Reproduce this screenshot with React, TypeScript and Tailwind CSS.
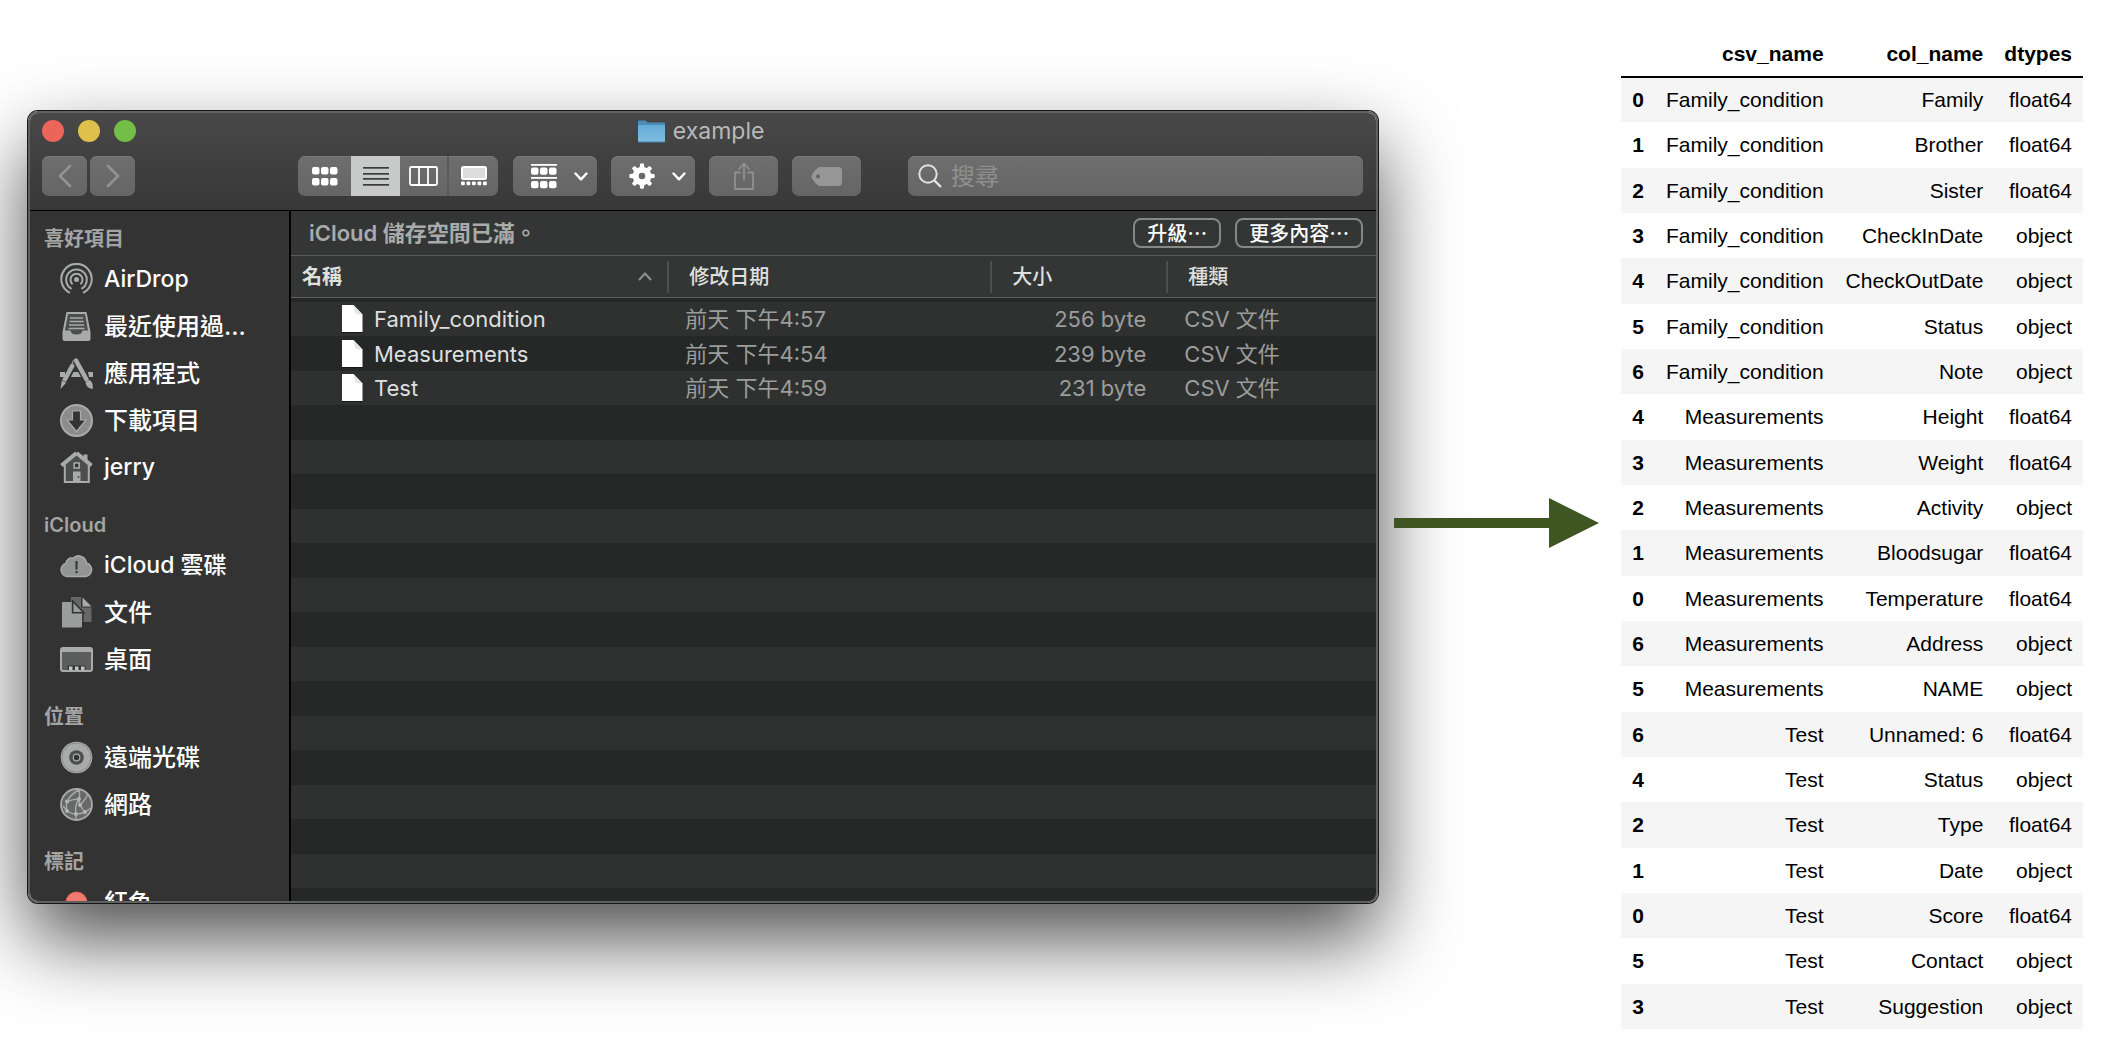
import React from 'react';

type IconProps = { className?: string };

const csvRows: [number, string, string, string][] = [
  [0, 'Family_condition', 'Family', 'float64'],
  [1, 'Family_condition', 'Brother', 'float64'],
  [2, 'Family_condition', 'Sister', 'float64'],
  [3, 'Family_condition', 'CheckInDate', 'object'],
  [4, 'Family_condition', 'CheckOutDate', 'object'],
  [5, 'Family_condition', 'Status', 'object'],
  [6, 'Family_condition', 'Note', 'object'],
  [4, 'Measurements', 'Height', 'float64'],
  [3, 'Measurements', 'Weight', 'float64'],
  [2, 'Measurements', 'Activity', 'object'],
  [1, 'Measurements', 'Bloodsugar', 'float64'],
  [0, 'Measurements', 'Temperature', 'float64'],
  [6, 'Measurements', 'Address', 'object'],
  [5, 'Measurements', 'NAME', 'object'],
  [6, 'Test', 'Unnamed: 6', 'float64'],
  [4, 'Test', 'Status', 'object'],
  [2, 'Test', 'Type', 'float64'],
  [1, 'Test', 'Date', 'object'],
  [0, 'Test', 'Score', 'float64'],
  [5, 'Test', 'Contact', 'object'],
  [3, 'Test', 'Suggestion', 'object'],
];

const files = [
  { name: 'Family_condition', date: '前天 下午4:57', size: '256 byte' },
  { name: 'Measurements', date: '前天 下午4:54', size: '239 byte' },
  { name: 'Test', date: '前天 下午4:59', size: '231 byte' },
];

/* ---------- sidebar icons ---------- */

function AirDropIcon() {
  return (
    <svg viewBox="0 0 33 33" className="size-[33px]" fill="none" stroke="#a9abaa" strokeWidth="2">
      <circle cx="16.500" cy="16.500" r="2.500" fill="#a9abaa" stroke="none" />
      <path d="M12.600 21.200a6 6 0 1 1 7.800 0" />
      <path d="M11.600 25.600a10.300 10.300 0 1 1 9.800 0" transform="translate(0 .2)" />
      <path d="M9.900 29.800a15.200 15.200 0 1 1 13.200 0" />
    </svg>
  );
}

function RecentsIcon() {
  return (
    <svg viewBox="0 0 33 33" className="size-[33px]" fill="none">
      <path d="M6.500 2h20l4 20v6.500a2.500 2.500 0 0 1-2.500 2.500H5a2.500 2.500 0 0 1-2.500-2.500V22z" fill="#a9abaa" />
      <path d="M8 4h17l3 16.500H22.500c-.6 3-2.500 4-6 4s-5.400-1-6-4H5z" fill="#4b4e4d" />
      <path d="M10 8h13M9.500 11.500h14M9 15h15M8.500 18.500h16" stroke="#a9abaa" strokeWidth="1.700" />
    </svg>
  );
}

function AppsIcon() {
  return (
    <svg viewBox="0 0 33 33" className="size-[33px]" fill="none">
      <path d="M0 15h5v5H0zM13.500 15h6l2.500 5H11zM28 15h5v5h-4z" fill="#a9abaa" />
      <path d="M13 7.500 L4 24" stroke="#a9abaa" strokeWidth="4.500" />
      <path d="M1.800 23.500l4.300 2.300L.5 32z" fill="#a9abaa" />
      <circle cx="14" cy="5.500" r="2.200" fill="#a9abaa" />
      <path d="M15.500 3 L27.500 24.500" stroke="#343434" strokeWidth="7" />
      <path d="M16 3.500 L26.500 22.500" stroke="#a9abaa" strokeWidth="4.500" strokeLinecap="round" />
      <path d="M25.500 25.500l4.300-2.500c3 2.500 3.200 5 3 9-3.500-.5-6.500-2-7.300-6.500z" fill="#a9abaa" />
    </svg>
  );
}

function DownloadsIcon() {
  return (
    <svg viewBox="0 0 33 33" className="size-[33px]">
      <circle cx="16.500" cy="16.500" r="15.500" fill="#8a8d8c" stroke="#a9abaa" strokeWidth="2" />
      <path d="M12.500 7h8v9h5.500l-9.500 11.500L7 16h5.500z" fill="#333333" stroke="#a9abaa" strokeWidth="1.200" />
    </svg>
  );
}

function HomeIcon() {
  return (
    <svg viewBox="0 0 33 33" className="size-[33px]" fill="none">
      <path d="M23.500 3.500h4V11l-4-3.500z" fill="#a9abaa" />
      <path d="M4.800 13L16.500 4l12.300 9v18h-24z" fill="#4b4e4d" />
      <path d="M4.800 14v17h24V14" stroke="#a9abaa" strokeWidth="2" />
      <path d="M16.500 2 L31.500 14.500 M16.500 2 L1.500 14.500" stroke="#a9abaa" strokeWidth="4" />
      <path d="M14.200 12h5v5h-5z" stroke="#a9abaa" strokeWidth="1.600" fill="#333333" />
      <path d="M13 20.500h7.500V31H13z" fill="#a9abaa" />
      <circle cx="18.500" cy="26" r="1" fill="#4b4e4d" />
    </svg>
  );
}

function CloudIcon() {
  return (
    <svg viewBox="0 0 33 33" className="size-[33px]">
      <path
        d="M7.500 27.500a6.700 6.700 0 0 1-1.300-13.200 5.300 5.300 0 0 1 6.700-5A8 8 0 0 1 26.500 14a6.900 6.900 0 0 1-1 13.500z"
        fill="#929594"
        stroke="#a9abaa"
        strokeWidth="1.500"
      />
      <path d="M16.500 12v8.500" stroke="#333333" strokeWidth="2" />
      <circle cx="16.500" cy="23" r="1.200" fill="#333333" />
    </svg>
  );
}

function DocumentsIcon() {
  return (
    <svg viewBox="0 0 33 33" className="size-[33px]">
      <path d="M11 1h10v10.500h10.500V26H11z" fill="#656867" />
      <path d="M22.500 1.500v9h9z" fill="#a9abaa" />
      <path d="M2 6h11.500v10.500H22V31.500H2z" fill="#9a9d9c" />
      <path d="M23 16.500V31.500h-1.500" stroke="#333333" strokeWidth="1.500" fill="none" />
      <path d="M12.600 5v11.800h11.200z" fill="#9a9d9c" stroke="#333333" strokeWidth="1.600" />
    </svg>
  );
}

function DesktopIcon() {
  return (
    <svg viewBox="0 0 33 33" className="size-[33px]">
      <rect x="1" y="5" width="31" height="23" rx="2" fill="#5b5e5d" stroke="#a9abaa" strokeWidth="2" />
      <path d="M1 5h31v4H1z" fill="#a9abaa" />
      <path d="M7.500 22.500h18V27h-18z" fill="#333333" />
      <path d="M9 23.500h3.500V27H9zM15 23.500h3.500V27H15zM21 23.500h3.500V27H21z" fill="#c4c6c5" />
    </svg>
  );
}

function DiscIcon() {
  return (
    <svg viewBox="0 0 33 33" className="size-[33px]" fill="none">
      <circle cx="16.500" cy="16.500" r="15.800" fill="#a9abaa" />
      <circle cx="16.500" cy="16.500" r="14.500" stroke="#8a8d8c" />
      <circle cx="16.500" cy="16.500" r="7.300" fill="#4b4e4d" />
      <circle cx="16.500" cy="16.500" r="3.300" stroke="#a9abaa" strokeWidth="1.200" fill="#333333" />
    </svg>
  );
}

function NetworkIcon() {
  return (
    <svg viewBox="0 0 33 33" className="size-[33px]" fill="none" stroke="#a9abaa" strokeWidth="1.400">
      <circle cx="16.500" cy="16.500" r="15.500" fill="#666968" strokeWidth="1.800" />
      <path d="M7 13.500C10 8 14 4 20 1.500M7 13.500C6 17 6 20 7 23M7 13.500C11 12 15 11 19 11M19 11c1-3 1-6 0-9.500M19 11C16 15 15 20 16 26v6M20 17c3-3 6-6 7.500-10.500M19 11c0 6 3 10 6 13M7 23c3 2 6 3 9 3s6-.5 9-2l6-4M7 23l-4-5" />
      <g fill="#b4b6b5" stroke="none">
        <circle cx="7" cy="13.500" r="2" />
        <circle cx="19" cy="11" r="2" />
        <circle cx="20" cy="17" r="2" />
        <circle cx="7" cy="23" r="2" />
        <circle cx="16" cy="26" r="2" />
        <circle cx="25" cy="24" r="2" />
      </g>
    </svg>
  );
}

function RedTagIcon() {
  return (
    <svg viewBox="0 0 33 33" className="size-[33px]">
      <circle cx="16.500" cy="16.500" r="10.500" fill="#f17b70" stroke="#ee6153" />
    </svg>
  );
}

const sidebarGroups = [
  {
    title: '喜好項目',
    items: [
      { label: 'AirDrop', size: 'text-[23px]', Icon: AirDropIcon },
      { label: '最近使用過...', size: 'text-[24px]', Icon: RecentsIcon },
      { label: '應用程式', size: 'text-[24px]', Icon: AppsIcon },
      { label: '下載項目', size: 'text-[24px]', Icon: DownloadsIcon },
      { label: 'jerry', size: 'text-[23px]', Icon: HomeIcon },
    ],
  },
  {
    title: 'iCloud',
    items: [
      { label: 'iCloud 雲碟', size: 'text-[23px]', Icon: CloudIcon },
      { label: '文件', size: 'text-[24px]', Icon: DocumentsIcon },
      { label: '桌面', size: 'text-[24px]', Icon: DesktopIcon },
    ],
  },
  {
    title: '位置',
    items: [
      { label: '遠端光碟', size: 'text-[24px]', Icon: DiscIcon },
      { label: '網路', size: 'text-[24px]', Icon: NetworkIcon },
    ],
  },
  { title: '標記', items: [{ label: '紅色', size: 'text-[24px]', Icon: RedTagIcon }] },
];

/* ---------- toolbar icons ---------- */

function GridIcon() {
  return (
    <svg width="26" height="20" viewBox="0 0 26 20" fill="#fff">
      {[0, 9, 18].map((x) =>
        [1, 12].map((y) => <rect key={`${x}-${y}`} x={x} y={y} width="7.500" height="7.500" rx="2" />),
      )}
    </svg>
  );
}

function ListIcon() {
  return (
    <svg width="26" height="20" viewBox="0 0 26 20" fill="#3b3b3b">
      {[1, 7, 12, 18].map((y) => (
        <rect key={y} x="0" y={y} width="26" height="1.700" />
      ))}
    </svg>
  );
}

function ColumnsIcon() {
  return (
    <svg width="29" height="20" viewBox="0 0 29 20" fill="none" stroke="#fff" strokeWidth="1.800">
      <rect x="1" y="1" width="27" height="18" rx="1.500" />
      <path d="M10 1v18M19 1v18" />
    </svg>
  );
}

function GalleryIcon() {
  return (
    <svg width="26" height="20" viewBox="0 0 26 20">
      <rect x="1" y="1" width="24" height="12" rx="1.500" fill="#dcdcdc" stroke="#fff" strokeWidth="2" />
      {[0, 5.5, 11, 16.5, 22].map((x) => (
        <rect key={x} x={x} y="15.500" width="3.800" height="3.800" rx="1" fill="#fff" />
      ))}
    </svg>
  );
}

function GroupIcon() {
  return (
    <svg width="26" height="26" viewBox="0 0 26 26" fill="#fff">
      <rect y="1" width="26" height="1.800" />
      <rect y="14" width="26" height="1.800" />
      {[0, 9, 18].map((x) =>
        [4.5, 18].map((y) => <rect key={`${x}-${y}`} x={x} y={y} width="7.500" height="7.300" rx="2" />),
      )}
    </svg>
  );
}

function GearIcon() {
  return (
    <svg width="26" height="26" viewBox="-13 -13 26 26" fill="#fff">
      {[0, 45, 90, 135, 180, 225, 270, 315].map((a) => (
        <path key={a} d="M-2.600 -6 L-1.900 -12.200 Q0 -13.300 1.900 -12.200 L2.600 -6z" transform={`rotate(${a})`} />
      ))}
      <circle r="6.300" fill="none" stroke="#fff" strokeWidth="6" />
    </svg>
  );
}

function ChevronDown() {
  return (
    <svg width="14" height="9" viewBox="0 0 14 9" fill="none" stroke="#fff" strokeWidth="2.400" strokeLinecap="round" strokeLinejoin="round">
      <path d="M1.500 1.500 L7 7.300 L12.500 1.500" />
    </svg>
  );
}

function ShareIcon() {
  return (
    <svg width="22" height="28" viewBox="0 0 22 28" fill="none" stroke="#8f8f8f" strokeWidth="1.800">
      <path d="M7.500 10.500H2V27h18V10.500h-5.500M11 18.500V1.500M5.500 7.500 11 1.500l5.500 6" />
    </svg>
  );
}

function TagIcon() {
  return (
    <svg width="31" height="19" viewBox="0 0 31 19">
      <path d="M9 0h18a4 4 0 0 1 4 4v11a4 4 0 0 1-4 4H9C6 19 .5 12 .5 9.500S6 0 9 0z" fill="#969696" />
      <circle cx="7" cy="9.500" r="2" fill="#636363" />
    </svg>
  );
}

function SearchIcon({ className }: IconProps) {
  return (
    <svg width="24" height="24" viewBox="0 0 24 24" fill="none" stroke="#e2e2e2" strokeWidth="2" className={className}>
      <circle cx="10" cy="10" r="8.700" />
      <path d="M16.300 16.300 L23 23" strokeWidth="2.400" />
    </svg>
  );
}

function FolderIcon() {
  return (
    <svg width="27" height="23" viewBox="0 0 27 23">
      <defs>
        <linearGradient id="folder-front" x1="0" y1="0" x2="0" y2="1">
          <stop offset="0" stopColor="#62acd9" />
          <stop offset="1" stopColor="#7fbde0" />
        </linearGradient>
      </defs>
      <path d="M0 1.500Q0 .5 1 .5h6.500l2 2H26q1 0 1 1V8H0z" fill="#4c8db5" />
      <path d="M0 5h27v16q0 1-1 1H1q-1 0-1-1z" fill="url(#folder-front)" />
      <path d="M.5 22h26" stroke="#4a86ab" />
    </svg>
  );
}

function FileIcon() {
  return (
    <svg width="21" height="28" viewBox="0 0 21 28" className="shrink-0">
      <path d="M0 0h11.500L20.500 9.500V27H0z" fill="#fff" />
      <path d="M11.500 0 L20.500 9.500 Q15 9.500 13.500 8 Q12.500 6 11.500 0z" fill="#e4e4e4" />
      <path d="M0 27.500h20.500" stroke="#161717" />
    </svg>
  );
}

const control =
  'flex h-10 items-center justify-center bg-linear-to-b from-[#6e6e6e] to-[#656565] shadow-[inset_0_1px_0_#7a7a7a]';

function Toolbar() {
  return (
    <div className="flex pb-[14px] pl-3 pr-[13px]">
      <div className="flex gap-[3px]">
        <button aria-label="上一頁" className={`${control} w-[45px] rounded-[7px]`}>
          <svg width="14" height="24" viewBox="0 0 14 24" fill="none" stroke="#929292" strokeWidth="2.600" strokeLinecap="round">
            <path d="M12 2 L2 12 L12 22" />
          </svg>
        </button>
        <button aria-label="下一頁" className={`${control} w-[45px] rounded-[7px]`}>
          <svg width="14" height="24" viewBox="0 0 14 24" fill="none" stroke="#929292" strokeWidth="2.600" strokeLinecap="round">
            <path d="M2 2 L12 12 L2 22" />
          </svg>
        </button>
      </div>
      <div className="ml-[163px] flex overflow-hidden rounded-[7px]">
        <button aria-label="圖像" className={`${control} w-[53px]`}>
          <GridIcon />
        </button>
        <button aria-label="列表" aria-pressed="true" className="flex h-10 w-[49px] items-center justify-center bg-[#c8cac9]">
          <ListIcon />
        </button>
        <button aria-label="直欄" className={`${control} w-[49px] border-r-2 border-[#5b5b5b]`}>
          <ColumnsIcon />
        </button>
        <button aria-label="圖庫" className={`${control} w-[49px]`}>
          <GalleryIcon />
        </button>
      </div>
      <button aria-label="群組" className={`${control} ml-[15px] w-[84px] gap-[17px] rounded-[7px] pl-2`}>
        <GroupIcon />
        <ChevronDown />
      </button>
      <button aria-label="動作" className={`${control} ml-[14px] w-[84px] gap-[17px] rounded-[7px] pl-2`}>
        <GearIcon />
        <ChevronDown />
      </button>
      <button aria-label="分享" className={`${control} ml-[14px] w-[69px] rounded-[7px]`}>
        <ShareIcon />
      </button>
      <button aria-label="標籤" className={`${control} ml-[14px] w-[69px] rounded-[7px]`}>
        <TagIcon />
      </button>
      <label className={`${control} ml-[47px] min-w-0 flex-1 gap-[9px] rounded-[7px] pl-[10px]`}>
        <SearchIcon className="shrink-0" />
        <input
          type="search"
          aria-label="搜尋"
          placeholder="搜尋"
          className="h-full min-w-0 flex-1 bg-transparent text-[24px] text-white outline-none placeholder:text-[#8f8f8f]"
        />
      </label>
    </div>
  );
}

function Sidebar() {
  return (
    <nav
      aria-label="側邊欄"
      className="w-[261px] shrink-0 overflow-hidden border-r-2 border-black bg-[#333333] pt-[9px] [contain:size]"
    >
      {sidebarGroups.map((group) => (
        <section key={group.title} className="mb-[15px]">
          <h2 className="flex h-9 items-center pl-[14px] pt-px text-[20px] font-semibold text-[#a4a4a4]">{group.title}</h2>
          <ul>
            {group.items.map(({ label, size, Icon }) => (
              <li key={label}>
                <a
                  href="#"
                  className={`flex h-[47px] items-center gap-[11px] whitespace-nowrap pl-[30px] font-medium text-white ${size}`}
                >
                  <Icon />
                  {label}
                </a>
              </li>
            ))}
          </ul>
        </section>
      ))}
    </nav>
  );
}

function ColumnLabel({ children, first }: { children: React.ReactNode; first?: boolean }) {
  return (
    <div
      className={
        first
          ? 'flex h-8 items-center justify-between pl-[11px] pr-[15px]'
          : 'flex h-8 items-center border-l-2 border-[#4d4f4e] pl-5'
      }
    >
      {children}
    </div>
  );
}

function FileList() {
  return (
    <div className="min-w-0 flex-1 bg-[#262827]">
      <div className="flex h-[45px] items-center gap-[14px] border-b border-[#5a5c5b] bg-[#343635] pl-[18px] pr-[13px]">
        <p className="flex-1 text-[22px] font-semibold text-[#a9abaa]">iCloud 儲存空間已滿。</p>
        {['升級…', '更多內容…'].map((label) => (
          <button
            key={label}
            className="flex h-[30px] items-center rounded-lg border-2 border-[#868887] px-3 font-['Noto_Sans_CJK_TC',sans-serif] text-[20px] font-medium leading-none text-white"
          >
            {label}
          </button>
        ))}
      </div>
      <table className="w-full table-fixed border-separate border-spacing-0">
        <colgroup>
          <col />
          <col className="w-[323px]" />
          <col className="w-[176px]" />
          <col className="w-[210px]" />
        </colgroup>
        <thead>
          <tr className="h-[42px] bg-[#343635] text-left text-[20px] text-[#dfe0df]">
            <th className="border-b border-[#5e605f] p-0 font-semibold">
              <ColumnLabel first>
                名稱
                <svg width="14" height="9" viewBox="0 0 14 9" fill="none" stroke="#8f9190" strokeWidth="2">
                  <path d="M1 8 L7 1.500 L13 8" />
                </svg>
              </ColumnLabel>
            </th>
            <th className="border-b border-[#5e605f] p-0 font-medium">
              <ColumnLabel>修改日期</ColumnLabel>
            </th>
            <th className="border-b border-[#5e605f] p-0 font-medium">
              <ColumnLabel>大小</ColumnLabel>
            </th>
            <th className="border-b border-[#5e605f] p-0 font-medium">
              <ColumnLabel>種類</ColumnLabel>
            </th>
          </tr>
        </thead>
        <tbody className="text-[22px] leading-[34px] text-[#9b9d9c]">
          <tr aria-hidden="true" className="h-1">
            <td colSpan={4} className="p-0" />
          </tr>
          {files.map((file, i) => (
            <tr key={file.name} className={i % 2 === 0 ? 'h-[34px] bg-[#2f3130]' : 'h-[35px] bg-[#262827]'}>
              <td className="p-0">
                <div className="flex items-center gap-[11px] pl-[51px] text-[#dedfdf]">
                  <FileIcon />
                  {file.name}
                </div>
              </td>
              <td className="p-0 pl-[18px]">{file.date}</td>
              <td className="p-0 pr-5 text-right">{file.size}</td>
              <td className="p-0 pl-[18px]">CSV 文件</td>
            </tr>
          ))}
        </tbody>
      </table>
      {Array.from({ length: 14 }, (_, i) => (
        <div key={i} className={i % 2 === 0 ? 'h-[35px] bg-[#262827]' : 'h-[34px] bg-[#2f3130]'} />
      ))}
      <div className="h-[13px] bg-[#262827]" />
    </div>
  );
}

function FinderWindow() {
  return (
    <section
      aria-label="example"
      className="mt-[111px] min-w-0 flex-1 overflow-hidden rounded-[10px] border-2 border-[#5f6160] shadow-[0_0_0_1px_#161716,0_36px_80px_rgba(0,0,0,0.7)]"
    >
      <header className="border-b border-black bg-linear-to-b from-[#484848] to-[#383838]">
        <div className="grid h-[43px] grid-cols-[1fr_auto_1fr] items-center pb-[7px] pl-3 pr-4">
          <div className="flex gap-[14px]">
            <button aria-label="關閉" className="size-[22px] rounded-full bg-[#ed655a]" />
            <button aria-label="縮到最小" className="size-[22px] rounded-full bg-[#e0c04c]" />
            <button aria-label="放大" className="size-[22px] rounded-full bg-[#72be47]" />
          </div>
          <h1 className="flex items-center gap-2 text-[23px] leading-[30px] text-[#b9b9b9]">
            <FolderIcon />
            example
          </h1>
        </div>
        <Toolbar />
      </header>
      <div className="flex">
        <Sidebar />
        <FileList />
      </div>
    </section>
  );
}

function Arrow() {
  return (
    <svg width="205" height="50" viewBox="0 0 205 50" className="relative ml-4 mt-[498px] shrink-0" fill="#3f5622">
      <path d="M0 20h155V0l50 25-50 25V30H0z" />
    </svg>
  );
}

function DtypesTable() {
  return (
    <table className="ml-[22px] mt-[31px] shrink-0 text-right font-['Liberation_Sans',Arial,sans-serif] text-[21px] leading-6 text-black">
      <thead>
        <tr className="h-[46px] border-b-2 border-black">
          <td />
          <th className="px-[11px] py-0 font-bold">csv_name</th>
          <th className="px-[11px] py-0 font-bold">col_name</th>
          <th className="py-0 pl-[10px] pr-[11px] font-bold">dtypes</th>
        </tr>
      </thead>
      <tbody>
        {csvRows.map(([index, csv, col, dtype], i) => (
          <tr key={i} className={`${i % 3 === 1 ? 'h-[46px]' : 'h-[45px]'} ${i % 2 === 0 ? 'bg-[#f5f5f5]' : 'bg-white'}`}>
            <th className="px-[11px] py-0 font-bold">{index}</th>
            <td className="px-[11px] py-0">{csv}</td>
            <td className="px-[11px] py-0">{col}</td>
            <td className="py-0 pl-[10px] pr-[11px]">{dtype}</td>
          </tr>
        ))}
      </tbody>
    </table>
  );
}

export default function App() {
  return (
    <main
      lang="zh-Hant"
      className="flex min-h-screen items-start overflow-hidden bg-white pl-7 pr-[19px] font-['Inter','Noto_Sans_CJK_TC',sans-serif]"
    >
      <FinderWindow />
      <Arrow />
      <DtypesTable />
    </main>
  );
}
